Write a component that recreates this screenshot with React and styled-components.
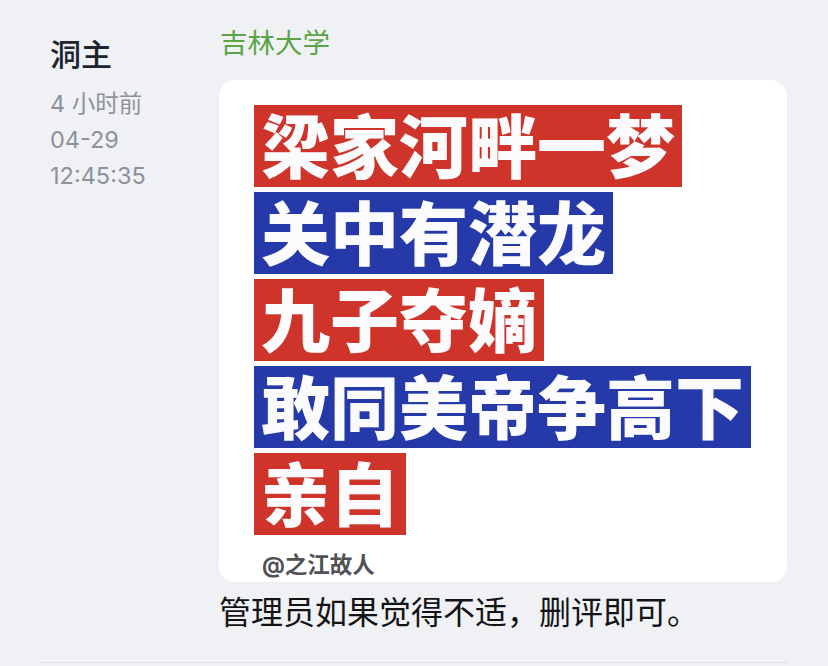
import styled, {createGlobalStyle} from 'styled-components'

const GlobalStyle = createGlobalStyle`
  html, body {
    margin: 0;
    padding: 0;
    background: #f0f1f5;
  }
  body {
    font-family: Inter, "Noto Sans CJK SC", "Noto Sans", sans-serif;
  }
`

const Reply = styled.div`
  display: grid;
  grid-template-columns: 179px 568px;
  margin: 0 41px 0 40px;
  border-bottom: 1px solid #dfe0e4;
  height: 663px;
  box-sizing: border-box;
`

const Side = styled.div`
  padding: 35px 0 0 10px;
  display: flex;
  flex-direction: column;
`

const Name = styled.div`
  font-size: 31px;
  line-height: 40px;
  font-weight: 500;
  color: #1c2430;
  margin-bottom: 11px;
`

const Meta = styled.div`
  font-size: 23.5px;
  line-height: 36px;
  color: #8e9199;
`

const Main = styled.div`
  padding-top: 25px;
  display: flex;
  flex-direction: column;
`

const Tag = styled.div`
  font-size: 27.5px;
  line-height: 36px;
  color: #5ba546;
  padding-left: 1px;
`

const Card = styled.div`
  margin-top: 19px;
  background: #ffffff;
  border-radius: 16px;
  padding: 25px 0 2px 35px;
  display: flex;
  flex-direction: column;
  align-items: flex-start;
  gap: 5px;
`

const Banner = styled.div`
  box-sizing: border-box;
  height: 82px;
  padding: 4px 7px 0;
  line-height: 78px;
  font-size: 69px;
  font-weight: 900;
  color: #fbfbfd;
  background: ${p => (p.$tone === 'blue' ? '#2639a8' : '#cf342b')};
  white-space: nowrap;
`

const Credit = styled.div`
  margin: 10px 0 0 8px;
  font-size: 22.5px;
  line-height: 30px;
  font-weight: 700;
  color: #505255;
`

const Caption = styled.div`
  margin-top: 9px;
  font-size: 32px;
  line-height: 44px;
  color: #131416;
`

const lines = [
  {text: '梁家河畔一梦', tone: 'red'},
  {text: '关中有潜龙', tone: 'blue'},
  {text: '九子夺嫡', tone: 'red'},
  {text: '敢同美帝争高下', tone: 'blue'},
  {text: '亲自', tone: 'red'},
]

function App() {
  return (
    <>
      <GlobalStyle />
      <Reply>
        <Side>
          <Name>洞主</Name>
          <Meta>4 小时前</Meta>
          <Meta>04-29</Meta>
          <Meta>12:45:35</Meta>
        </Side>
        <Main>
          <Tag>吉林大学</Tag>
          <Card>
            {lines.map(line => (
              <Banner key={line.text} $tone={line.tone}>
                {line.text}
              </Banner>
            ))}
            <Credit>@之江故人</Credit>
          </Card>
          <Caption>管理员如果觉得不适，删评即可。</Caption>
        </Main>
      </Reply>
    </>
  )
}

export default App
